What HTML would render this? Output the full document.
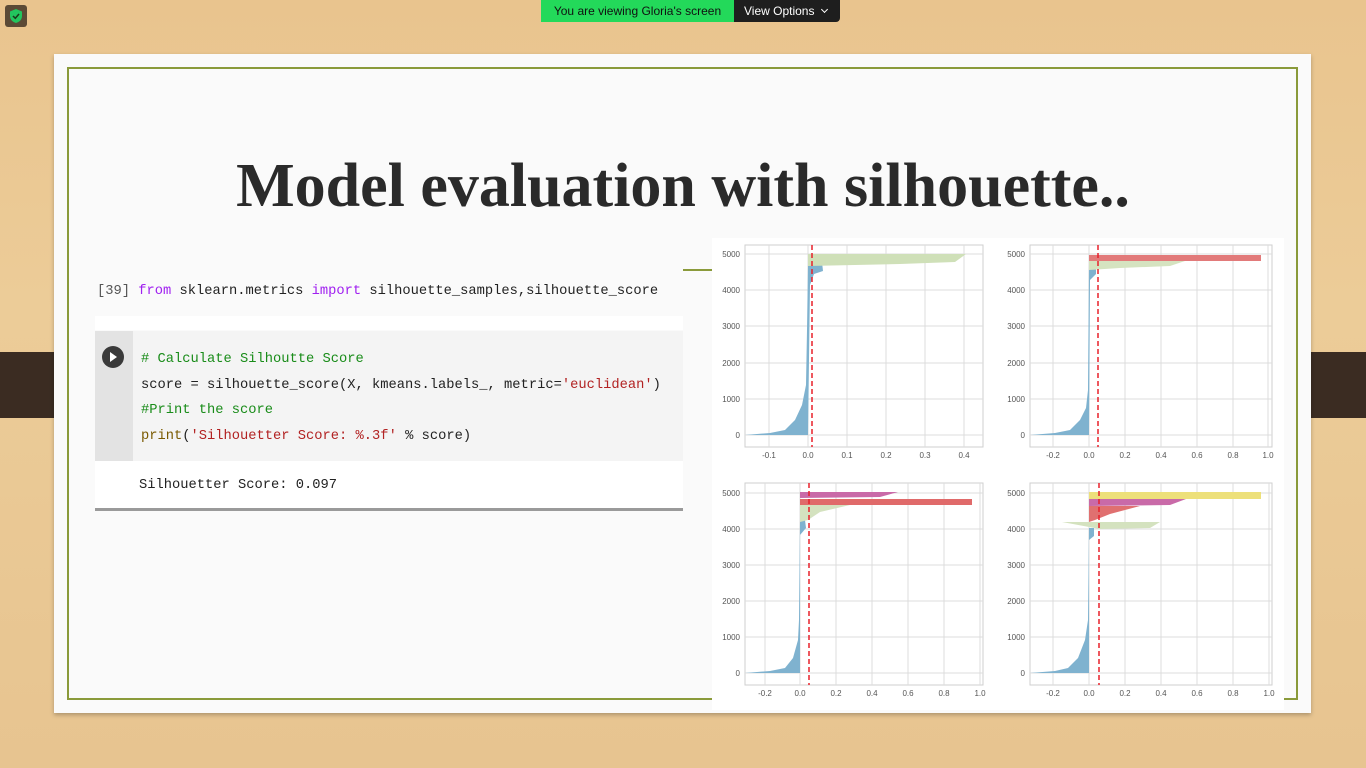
<!DOCTYPE html>
<html><head><meta charset="utf-8"><style>
*{margin:0;padding:0;box-sizing:border-box}
body{width:1366px;height:768px;overflow:hidden;position:relative;background:linear-gradient(180deg,#e9c48e 0%,#eccc98 40%,#e7c490 100%);font-family:"Liberation Sans",sans-serif}
.abs{position:absolute}
.mono{font-family:"Liberation Mono",monospace;font-size:13.75px;white-space:pre;color:#222}
</style></head><body>
<div class="abs" style="left:0;top:352px;width:54px;height:66px;background:#3b2c22"></div>
<div class="abs" style="left:1283px;top:352px;width:83px;height:66px;background:#3b2c22"></div>
<div class="abs" style="left:54px;top:54px;width:1257px;height:659px;background:#fafafa;box-shadow:0 2px 4px rgba(0,0,0,.25)"></div>
<div class="abs" style="left:67px;top:67px;width:1231px;height:633px;border:2px solid #8a9a3a"></div>
<div class="abs" style="left:0;top:151px;width:1366px;text-align:center;font-family:'Liberation Serif',serif;font-weight:bold;font-size:62px;color:#2a2a2a">Model evaluation with silhouette..</div>
<div class="abs" style="left:683px;top:269px;width:30px;height:2px;background:#8a9a3a"></div>

<div class="abs mono" style="left:97px;top:284px"><span style="color:#555">[39]</span> <span style="color:#a020f0">from</span> sklearn.metrics <span style="color:#a020f0">import</span> silhouette_samples,silhouette_score</div>
<div class="abs" style="left:95px;top:316px;width:588px;height:14px;background:#fff"></div>
<div class="abs" style="left:95px;top:331px;width:588px;height:130px;background:#f4f4f4"></div>
<div class="abs" style="left:95px;top:331px;width:38px;height:130px;background:#e3e3e3"></div>
<div class="abs" style="left:102px;top:346px;width:22px;height:22px;border-radius:50%;background:#3a3a3a"></div>
<div class="abs" style="left:110px;top:352px;width:0;height:0;border-left:7px solid #fff;border-top:5px solid transparent;border-bottom:5px solid transparent"></div>
<div class="abs mono" style="left:141px;top:347px;line-height:25.7px"><span style="color:#198c19"># Calculate Silhoutte Score</span>
score = silhouette_score(X, kmeans.labels_, metric=<span style="color:#b22222">'euclidean'</span>)
<span style="color:#198c19">#Print the score</span>
<span style="color:#7a5a00">print</span>(<span style="color:#b22222">'Silhouetter Score: %.3f'</span> % score)</div>
<div class="abs" style="left:95px;top:461px;width:588px;height:48px;background:#fff"></div>
<div class="abs mono" style="left:139px;top:478px">Silhouetter Score: 0.097</div>
<div class="abs" style="left:95px;top:508px;width:588px;height:3px;background:#9a9a9a"></div>

<svg class="abs" style="left:712px;top:238px" width="572" height="472" viewBox="712 238 572 472">
<rect x="712" y="238" width="572" height="472" fill="#fff"/>
<g stroke="#dcdcdc" stroke-width="1" fill="none">
<rect x="745" y="245" width="238" height="202" stroke="#cfcfcf"/>
<path d="M769 245V447M808 245V447M847 245V447M886 245V447M925 245V447M964 245V447M745 254H983M745 290H983M745 326H983M745 363H983M745 399H983M745 435H983"/>
<rect x="1030" y="245" width="242" height="202" stroke="#cfcfcf"/>
<path d="M1053 245V447M1089 245V447M1125 245V447M1161 245V447M1197 245V447M1233 245V447M1268 245V447M1030 254H1272M1030 290H1272M1030 326H1272M1030 363H1272M1030 399H1272M1030 435H1272"/>
<rect x="745" y="483" width="238" height="202" stroke="#cfcfcf"/>
<path d="M765 483V685M800 483V685M836 483V685M872 483V685M908 483V685M944 483V685M980 483V685M745 493H983M745 529H983M745 565H983M745 601H983M745 637H983M745 673H983"/>
<rect x="1030" y="483" width="242" height="202" stroke="#cfcfcf"/>
<path d="M1053 483V685M1089 483V685M1125 483V685M1161 483V685M1197 483V685M1233 483V685M1269 483V685M1030 493H1272M1030 529H1272M1030 565H1272M1030 601H1272M1030 637H1272M1030 673H1272"/>
</g>
<g fill="#7fb2cf">
<path d="M745 435L770 433L785 430L795 420L802 405L806 385L807 330L808 265L822 262L823 271L814 274L810 285L808 435Z"/>
<path d="M1030 435L1055 433L1070 430L1080 420L1086 408L1088 390L1089 265L1096 266L1096 274L1090 280L1089 435Z"/>
<path d="M745 673L770 671L785 668L793 658L798 640L799 620L800 520L805 520L806 528L800 535L800 673Z"/>
<path d="M1030 673L1055 671L1068 668L1078 658L1085 640L1088 620L1089 528L1094 528L1094 536L1089 540L1089 673Z"/>
</g>
<path d="M808 254L966 254L955 262L900 264L808 266Z" fill="#cfe0b8"/>
<rect x="1089" y="255" width="172" height="6" fill="#e27a7a"/>
<path d="M1089 261L1185 261L1170 266L1120 268L1089 270Z" fill="#d5e3c0"/>
<path d="M800 492L898 492L880 497L800 498Z" fill="#c96aa8"/>
<rect x="800" y="499" width="172" height="6" fill="#e06a6a"/>
<path d="M800 505L850 505L820 512L808 520L800 522Z" fill="#d4e2bf"/>
<rect x="1089" y="492" width="172" height="7" fill="#ede07a"/>
<path d="M1089 499L1186 499L1170 505L1089 506Z" fill="#c96aa8"/>
<path d="M1089 506L1140 506L1110 514L1095 520L1089 522Z" fill="#e07070"/>
<path d="M1062 522L1160 522L1150 528L1100 529Z" fill="#d4e2bf"/>
<g stroke="#e8202a" stroke-width="1.5" stroke-dasharray="5,3">
<path d="M812 245V447M1098 245V447M809 483V685M1099 483V685"/>
</g>
<g font-family="Liberation Sans,sans-serif" font-size="8" fill="#555" text-anchor="end">
<text x="740" y="257">5000</text><text x="740" y="293">4000</text><text x="740" y="329">3000</text><text x="740" y="366">2000</text><text x="740" y="402">1000</text><text x="740" y="438">0</text>
<text x="1025" y="257">5000</text><text x="1025" y="293">4000</text><text x="1025" y="329">3000</text><text x="1025" y="366">2000</text><text x="1025" y="402">1000</text><text x="1025" y="438">0</text>
<text x="740" y="496">5000</text><text x="740" y="532">4000</text><text x="740" y="568">3000</text><text x="740" y="604">2000</text><text x="740" y="640">1000</text><text x="740" y="676">0</text>
<text x="1025" y="496">5000</text><text x="1025" y="532">4000</text><text x="1025" y="568">3000</text><text x="1025" y="604">2000</text><text x="1025" y="640">1000</text><text x="1025" y="676">0</text>
</g>
<g font-family="Liberation Sans,sans-serif" font-size="8" fill="#555" text-anchor="middle">
<text x="769" y="458">-0.1</text><text x="808" y="458">0.0</text><text x="847" y="458">0.1</text><text x="886" y="458">0.2</text><text x="925" y="458">0.3</text><text x="964" y="458">0.4</text>
<text x="1053" y="458">-0.2</text><text x="1089" y="458">0.0</text><text x="1125" y="458">0.2</text><text x="1161" y="458">0.4</text><text x="1197" y="458">0.6</text><text x="1233" y="458">0.8</text><text x="1268" y="458">1.0</text>
<text x="765" y="696">-0.2</text><text x="800" y="696">0.0</text><text x="836" y="696">0.2</text><text x="872" y="696">0.4</text><text x="908" y="696">0.6</text><text x="944" y="696">0.8</text><text x="980" y="696">1.0</text>
<text x="1053" y="696">-0.2</text><text x="1089" y="696">0.0</text><text x="1125" y="696">0.2</text><text x="1161" y="696">0.4</text><text x="1197" y="696">0.6</text><text x="1233" y="696">0.8</text><text x="1269" y="696">1.0</text>
</g>
</svg>

<div class="abs" style="left:5px;top:5px;width:22px;height:22px;border-radius:3px;background:#5b4a36"></div>
<svg class="abs" style="left:8px;top:8px" width="16" height="16" viewBox="0 0 16 16"><path d="M8 1L14 3.5V8C14 11.5 11.5 14 8 15C4.5 14 2 11.5 2 8V3.5Z" fill="#22c55e"/><path d="M5 8L7.3 10.3L11 6" stroke="#1a3a1a" stroke-width="1.5" fill="none"/></svg>
<div class="abs" style="left:541px;top:0;width:193px;height:22px;background:#23d95a;color:#111;font-size:12px;line-height:22px;text-align:center">You are viewing Gloria's screen</div>
<div class="abs" style="left:734px;top:0;width:106px;height:22px;background:#1e1e1e;border-radius:0 0 4px 0;color:#fff;font-size:12px;line-height:22px;padding-left:10px">View Options <span style="display:inline-block;width:5px;height:5px;border-right:1.5px solid #fff;border-bottom:1.5px solid #fff;transform:rotate(45deg);margin-left:4px;position:relative;top:-3px"></span></div>
</body></html>
